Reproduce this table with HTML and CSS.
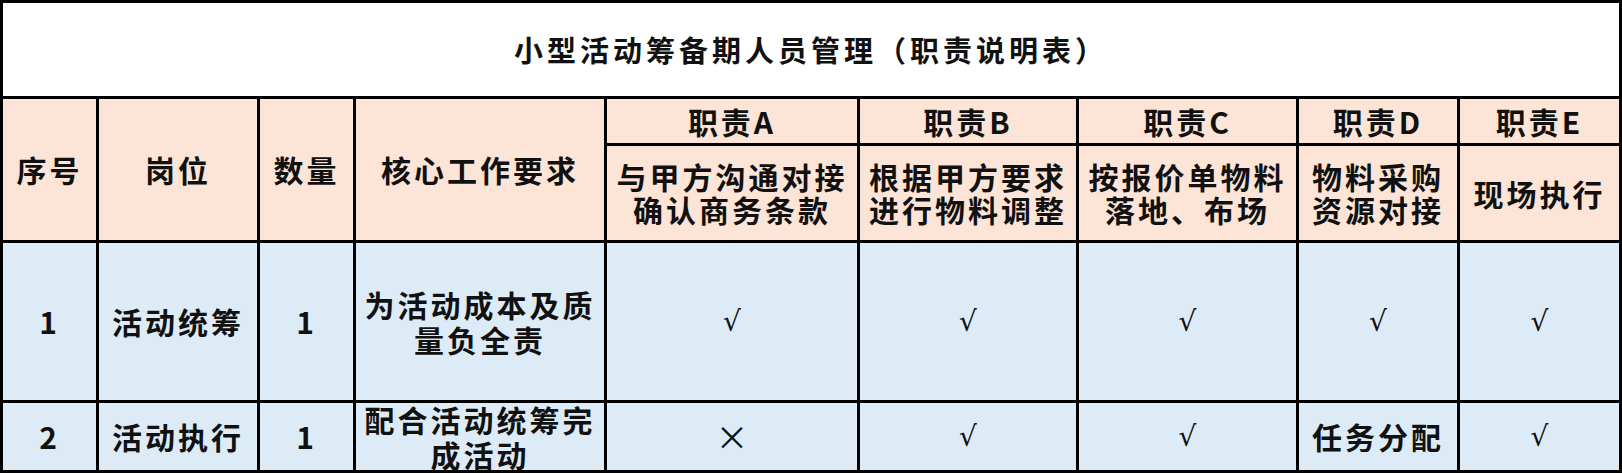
FILE: index.html
```html
<!DOCTYPE html>
<html lang="zh-CN">
<head>
<meta charset="utf-8">
<title>小型活动筹备期人员管理（职责说明表）</title>
<link rel="stylesheet" href="styles.css">
</head>
<body>
<div class="sheet">
  <div class="cell title">小型活动筹备期人员管理（职责说明表）</div>

  <div class="cell hd tall">序号</div>
  <div class="cell hd tall">岗位</div>
  <div class="cell hd tall">数量</div>
  <div class="cell hd tall">核心工作要求</div>
  <div class="cell hd">职责A</div>
  <div class="cell hd">职责B</div>
  <div class="cell hd">职责C</div>
  <div class="cell hd">职责D</div>
  <div class="cell hd">职责E</div>

  <div class="cell hd desc"><div class="lines"><span class="ln">与甲方沟通对接</span><span class="ln">确认商务条款</span></div></div>
  <div class="cell hd desc"><div class="lines"><span class="ln">根据甲方要求</span><span class="ln">进行物料调整</span></div></div>
  <div class="cell hd desc"><div class="lines"><span class="ln">按报价单物料</span><span class="ln">落地、布场</span></div></div>
  <div class="cell hd desc"><div class="lines"><span class="ln">物料采购</span><span class="ln">资源对接</span></div></div>
  <div class="cell hd desc">现场执行</div>

  <div class="cell bd">1</div>
  <div class="cell bd">活动统筹</div>
  <div class="cell bd">1</div>
  <div class="cell bd"><div class="lines body-lines"><span class="ln">为活动成本及质</span><span class="ln">量负全责</span></div></div>
  <div class="cell bd"><span class="mark">√</span></div>
  <div class="cell bd"><span class="mark">√</span></div>
  <div class="cell bd"><span class="mark">√</span></div>
  <div class="cell bd"><span class="mark">√</span></div>
  <div class="cell bd"><span class="mark">√</span></div>

  <div class="cell bd">2</div>
  <div class="cell bd">活动执行</div>
  <div class="cell bd">1</div>
  <div class="cell bd"><div class="lines body-lines"><span class="ln">配合活动统筹完</span><span class="ln">成活动</span></div></div>
  <div class="cell bd"><span class="cross">×</span></div>
  <div class="cell bd"><span class="mark">√</span></div>
  <div class="cell bd"><span class="mark">√</span></div>
  <div class="cell bd">任务分配</div>
  <div class="cell bd"><span class="mark">√</span></div>
</div>
</body>
</html>
```

FILE: styles.css
```css
html, body {
  margin: 0;
  padding: 0;
  background: #ffffff;
}

.sheet {
  display: grid;
  grid-template-columns: 93px 158px 93px 248px 250px 216px 217px 158px 159px;
  grid-template-rows: 93px 44px 94px 157px 67px;
  gap: 3px;
  padding: 3px;
  width: 1622px;
  height: 473px;
  box-sizing: border-box;
  background: #000000;
  font-family: "Noto Sans CJK SC", "Noto Sans", sans-serif;
  font-weight: 700;
  color: #111111;
}

.cell {
  display: flex;
  align-items: center;
  justify-content: center;
  text-align: center;
  font-size: 30px;
  line-height: 33px;
  letter-spacing: 3px;
  white-space: nowrap;
}

.lines {
  display: flex;
  flex-direction: column;
  align-items: center;
}

.ln {
  display: block;
  height: 33px;
  line-height: 33px;
}

.body-lines .ln {
  height: 35px;
  line-height: 35px;
}

.title {
  grid-column: 1 / -1;
  background: #ffffff;
  font-size: 29px;
  letter-spacing: 4px;
}

.hd {
  background: #fce4d6;
}

.tall {
  grid-row: span 2;
}

.bd {
  background: #ddebf7;
  line-height: 35px;
}

.mark {
  font-family: "DejaVu Serif", "Liberation Serif", serif;
  font-weight: 400;
  font-size: 28px;
  letter-spacing: 0;
}

.cross {
  font-weight: 400;
  font-size: 33px;
  letter-spacing: 0;
}
```
